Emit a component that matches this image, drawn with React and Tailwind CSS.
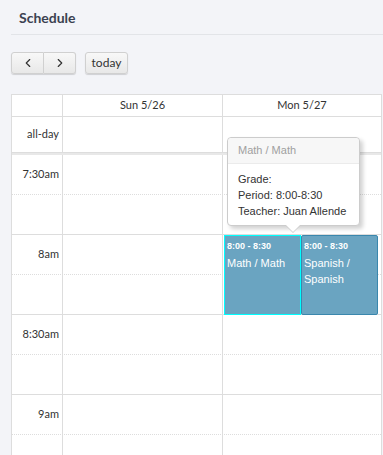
import { ChevronLeft, ChevronRight } from 'lucide-react'

const slots = [
  { label: '7:30am', solid: false },
  { label: '', solid: true },
  { label: '8am', solid: false },
  { label: '', solid: true },
  { label: '8:30am', solid: false },
  { label: '', solid: true },
  { label: '9am', solid: false },
  { label: '', solid: true },
]

function Event({ time, title, selected }) {
  return (
    <div
      className={
        'h-[80px] flex-1 bg-[#6aa4c1] text-white px-[2px] pt-[4px] ' +
        (selected ? 'border border-[#00ffff]' : 'border border-[#3a87ad] rounded-[2px]')
      }
      style={{ fontFamily: '"Liberation Sans", Arial, sans-serif' }}
    >
      <div className="text-[9px] font-bold leading-[12px]">{time}</div>
      <div className="text-[11px] leading-[16px] mt-[3px]">{title}</div>
    </div>
  )
}

export default function App() {
  return (
    <div
      className="w-[383px] h-[455px] overflow-hidden bg-[#f3f4f8] text-[#333]"
      style={{ fontFamily: 'Lato, "Liberation Sans", sans-serif' }}
    >
      <div className="ml-[11px] border-b border-[#e2e4e8] h-[35px] flex items-center pl-[8px]">
        <h1 className="text-[14px] font-bold text-[#3b4150]">Schedule</h1>
      </div>

      <div className="flex items-center ml-[11px] mt-[17px] gap-[9px]">
        <div className="flex h-[22px] rounded-[3px] shadow-[0_1px_1px_rgba(0,0,0,0.15)]">
          <button className="w-[33px] flex items-center justify-center border border-[#d0d0d0] rounded-l-[3px] bg-gradient-to-b from-[#f8f8f8] to-[#e8e8e8]">
            <ChevronLeft size={14} strokeWidth={2} color="#333" />
          </button>
          <button className="w-[32px] flex items-center justify-center border border-l-0 border-[#d0d0d0] rounded-r-[3px] bg-gradient-to-b from-[#f8f8f8] to-[#e8e8e8]">
            <ChevronRight size={14} strokeWidth={2} color="#333" />
          </button>
        </div>
        <button className="h-[22px] w-[43px] text-[12px] border border-[#d0d0d0] rounded-[3px] bg-gradient-to-b from-[#f8f8f8] to-[#e8e8e8] shadow-[0_1px_1px_rgba(0,0,0,0.15)] text-[#333]">
          today
        </button>
      </div>

      <div className="relative ml-[11px] mt-[20px] w-[371px] bg-white border-l border-r border-t border-[#ddd]">
        <div className="grid grid-cols-[51px_160px_1fr] h-[22px] border-b border-[#ddd] text-[11px]">
          <div className="border-r border-[#ddd]" />
          <div className="border-r border-[#ddd] flex items-center justify-center">Sun 5/26</div>
          <div className="flex items-center justify-center">Mon 5/27</div>
        </div>
        <div className="grid grid-cols-[51px_160px_1fr] h-[35px] text-[11px]">
          <div className="border-r border-[#ddd] flex items-center justify-end pr-[3px]">all-day</div>
          <div className="border-r border-[#ddd]" />
          <div />
        </div>
        <div className="h-[3px] bg-[#e8e8e8] border-t border-[#ddd]" />

        <div className="relative">
          {slots.map((s, i) => (
            <div
              key={i}
              className={
                'grid grid-cols-[51px_160px_1fr] h-[40px] text-[11px] ' +
                (s.solid ? 'border-b border-[#ddd]' : 'border-b border-dotted border-[#ddd]')
              }
            >
              <div className="border-r border-[#ddd] flex items-center justify-end pr-[3px]">{s.label}</div>
              <div className="border-r border-[#ddd]" />
              <div />
            </div>
          ))}

          <div className="absolute left-[212px] top-[80px] w-[154px] flex">
            <Event time="8:00 - 8:30" title="Math / Math" selected />
            <Event time="8:00 - 8:30" title={<>Spanish /<br />Spanish</>} />
          </div>
        </div>

        <div
          className="absolute left-[215px] top-[42px] w-[133px] bg-white border border-[#ccc] rounded-[4px] shadow-[3px_3px_4px_rgba(0,0,0,0.18)]"
          style={{ fontFamily: '"Liberation Sans", Arial, sans-serif' }}
        >
          <div className="h-[26px] bg-[#f7f7f7] border-b border-[#ebebeb] rounded-t-[4px] flex items-center pl-[10px] text-[11px] text-[#a0a0a0]">
            Math / Math
          </div>
          <div className="px-[10px] pt-[7px] pb-[6px] text-[11px] leading-[16px] text-[#333]">
            <div>Grade:</div>
            <div>Period: 8:00-8:30</div>
            <div>Teacher: Juan Allende</div>
          </div>
          <div className="absolute left-[57px] bottom-[-8px] w-0 h-0 border-l-[8px] border-r-[8px] border-t-[8px] border-l-transparent border-r-transparent border-t-[#ccc]" />
          <div className="absolute left-[58px] bottom-[-7px] w-0 h-0 border-l-[7px] border-r-[7px] border-t-[7px] border-l-transparent border-r-transparent border-t-white" />
        </div>
      </div>
    </div>
  )
}
